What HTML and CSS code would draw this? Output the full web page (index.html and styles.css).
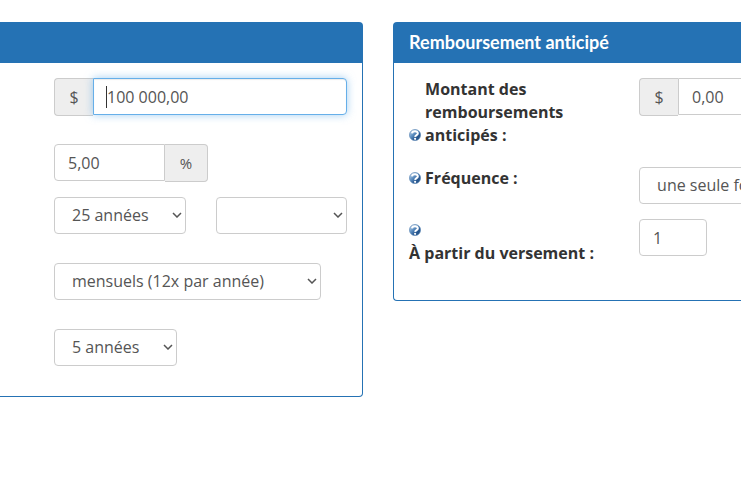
FILE: index.html
```html
<!DOCTYPE html>
<html lang="fr">
<head>
<meta charset="utf-8">
<title>Remboursement anticipé</title>
<link rel="stylesheet" href="styles.css">
</head>
<body>
<svg class="icon-defs" aria-hidden="true">
    <defs>
        <linearGradient id="help-fill" x1="0" y1="0" x2="1" y2="1">
            <stop offset="0" stop-color="#d3e3f3"/>
            <stop offset="0.4" stop-color="#5f90c2"/>
            <stop offset="0.65" stop-color="#2a5a92"/>
            <stop offset="1" stop-color="#1d4a80"/>
        </linearGradient>
        <symbol id="help" viewBox="0 0 12 12">
            <circle cx="6" cy="6" r="5.6" fill="url(#help-fill)" stroke="#5b86b5" stroke-width="0.6"/>
            <path d="M3 4.3C3.3 1.4 9.2 1.6 8.8 4.5C8.6 6.2 6.3 5.9 6.1 7.8" fill="none" stroke="#fff" stroke-width="2"/>
            <circle cx="6.1" cy="9.8" r="1.1" fill="#fff"/>
        </symbol>
    </defs>
</svg>

<form class="calculator">
    <section class="panel panel-loan">
        <div class="panel-heading"></div>
        <div class="panel-body">
            <div class="row row-addon">
                <div class="input-group amount">
                    <span class="addon">$</span>
                    <div class="field-focus">
                        <input class="form-control focused" type="text" value="100 000,00" aria-label="Montant">
                        <span class="caret"></span>
                    </div>
                </div>
            </div>
            <div class="row row-rate">
                <div class="input-group rate">
                    <input class="form-control" type="text" value="5,00" aria-label="Taux">
                    <span class="addon addon-percent">%</span>
                </div>
            </div>
            <div class="row row-split">
                <select class="form-control select-years" aria-label="Années">
                    <option>25 années</option>
                </select>
                <select class="form-control select-months" aria-label="Mois">
                    <option></option>
                </select>
            </div>
            <div class="row">
                <select class="form-control select-payments" aria-label="Versements">
                    <option>mensuels (12x par année)</option>
                </select>
            </div>
            <div class="row">
                <select class="form-control select-term" aria-label="Terme">
                    <option>5 années</option>
                </select>
            </div>
        </div>
    </section>

    <section class="panel panel-prepay">
        <div class="panel-heading"><h2>Remboursement anticipé</h2></div>
        <div class="panel-body">
            <div class="line line-amount">
                <div class="label">
                    <svg class="help"><use href="#help"/></svg>
                    <label class="label-narrow" for="prepay">Montant des remboursements anticipés :</label>
                </div>
                <div class="input-group">
                    <span class="addon">$</span>
                    <input class="form-control" type="text" id="prepay" value="0,00">
                </div>
            </div>
            <div class="line">
                <div class="label">
                    <svg class="help"><use href="#help"/></svg>
                    <label for="frequency">Fréquence :</label>
                </div>
                <select class="form-control select-frequency" id="frequency">
                    <option>une seule fois</option>
                </select>
            </div>
            <div class="line">
                <div class="label label-stacked">
                    <svg class="help"><use href="#help"/></svg>
                    <label for="start">À partir du versement :</label>
                </div>
                <input class="form-control start" type="text" id="start" value="1">
            </div>
        </div>
    </section>
</form>
</body>
</html>
```

FILE: styles.css
```css
* {
    box-sizing: border-box;
}
body {
    margin: 0;
    overflow-x: hidden;
    background-color: #fff;
    color: #333;
    font-family: "Open Sans", "Noto Sans", sans-serif;
    font-size: 16px;
    line-height: 23px;
}
.icon-defs {
    position: absolute;
    width: 0;
    height: 0;
}
.calculator {
    display: flex;
    align-items: flex-start;
    gap: 30px;
    padding-top: 22px;
}
.panel {
    border: 1px solid #2572b4;
    border-radius: 4px;
    background-color: #fff;
}
.panel-loan {
    flex: 0 0 49%;
    border-left: none;
    border-top-left-radius: 0;
    border-bottom-left-radius: 0;
}
.panel-prepay {
    flex: 1;
    min-width: 0;
    border-right: none;
    border-top-right-radius: 0;
    border-bottom-right-radius: 0;
}
.panel-heading {
    height: 40px;
    padding: 8px 15px;
    background-color: #2572b4;
    color: #fff;
}
.panel-heading h2 {
    margin: 0;
    font-family: Lato, sans-serif;
    font-size: 18px;
    font-weight: bold;
    line-height: 23px;
    font-variant-ligatures: none;
}
.panel-body {
    padding: 15px 15px 30px;
}
.panel-loan .panel-body {
    padding-left: 54px;
}
.row {
    display: flex;
    margin-bottom: 29px;
}
.row-addon {
    margin-bottom: 28px;
}
.row-rate {
    margin-bottom: 15px;
}
.row:last-child {
    margin-bottom: 0;
}
.row-split {
    justify-content: space-between;
}
.form-control {
    height: 37px;
    min-width: 0;
    padding: 6px 13px;
    border: 1px solid #ccc;
    border-radius: 4px;
    background-color: #fff;
    color: #555;
    font-family: inherit;
    font-size: 16px;
}
select.form-control {
    appearance: none;
    padding: 5px 0 7px 17px;
    background-image: url("data:image/svg+xml,%3Csvg xmlns='http://www.w3.org/2000/svg' width='10' height='6'%3E%3Cpath d='M1 1l4 4 4-4' fill='none' stroke='%23555' stroke-width='1.5'/%3E%3C/svg%3E");
    background-repeat: no-repeat;
    background-position: right 3px top 14px;
}
.input-group {
    display: flex;
}
.input-group .form-control {
    width: 100%;
}
.input-group .addon + .form-control,
.field-focus .form-control {
    border-top-left-radius: 0;
    border-bottom-left-radius: 0;
}
.addon {
    flex: 0 0 39px;
    border: 1px solid #ccc;
    border-right: none;
    border-radius: 4px 0 0 4px;
    background-color: #eee;
    color: #555;
    line-height: 36px;
    text-align: center;
}
.addon-percent {
    flex-basis: 43px;
    border-right: 1px solid #ccc;
    border-left: none;
    border-radius: 0 4px 4px 0;
    font-size: 15px;
}
.amount {
    flex: 1;
}
.field-focus {
    position: relative;
    flex: 1;
}
.form-control.focused {
    border-color: #66afe9;
    box-shadow: inset 0 1px 1px rgba(0, 0, 0, 0.08), 0 0 8px rgba(102, 175, 233, 0.6);
}
.caret {
    position: absolute;
    top: 8px;
    left: 13px;
    width: 1px;
    height: 22px;
    background-color: #333;
}
.rate {
    width: 154px;
}
.rate .form-control {
    border-top-right-radius: 0;
    border-bottom-right-radius: 0;
}
.select-years {
    width: 132px;
}
.select-months {
    width: 131px;
}
.select-payments {
    width: 267px;
}
.select-term {
    width: 123px;
}
.panel-prepay .panel-body {
    padding-right: 0;
    padding-bottom: 35px;
    overflow: hidden;
}
.line {
    display: grid;
    grid-template-columns: 230px 200px;
    align-items: start;
    margin-bottom: 15px;
}
.line-amount {
    margin-bottom: 20px;
}
.line:last-child {
    margin-bottom: 0;
}
.label {
    display: flex;
    align-items: flex-end;
    gap: 4px;
    font-weight: bold;
}
.label-narrow {
    width: 150px;
}
.label-stacked {
    flex-direction: column;
    align-items: flex-start;
    gap: 0;
}
.help {
    flex: none;
    width: 12px;
    height: 12px;
    margin: 5px 0 6px;
}
.start {
    width: 68px;
}
```
